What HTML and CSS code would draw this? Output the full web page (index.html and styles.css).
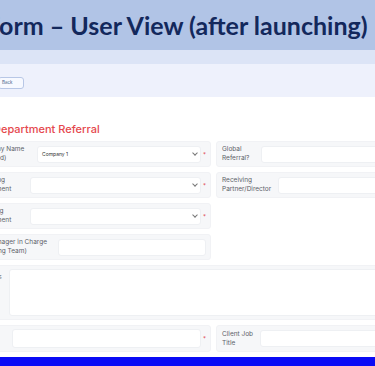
FILE: index.html
```html
<!DOCTYPE html>
<html lang="en">
  <head>
    <meta charset="UTF-8" />
    <title>Referral Form – User View</title>
    <link rel="stylesheet" href="styles.css">
  </head>
  <body>
    <header class="slide-title">
      <h1>Form – User View (after launching)</h1>
    </header>
    <div class="app-bar"></div>
    <div class="toolbar">
      <button class="btn-small" type="button">Back</button>
    </div>

    <main class="form-area">
      <div class="sheet">
        <h2 class="section-title">Department Referral</h2>

        <form class="grid">
          <div class="card">
            <label class="lbl w62">Company Name (Referred)</label>
            <div class="input select"><span class="value">Company 1</span><span class="chev"></span></div>
            <span class="req">*</span>
          </div>
          <div class="card right">
            <label class="lbl w39">Global Referral?</label>
            <div class="input"></div>
          </div>

          <div class="card">
            <label class="lbl w55">Receiving Department</label>
            <div class="input select"><span class="chev"></span></div>
            <span class="req">*</span>
          </div>
          <div class="card right">
            <label class="lbl w56">Receiving Partner/Director</label>
            <div class="input"></div>
          </div>

          <div class="card">
            <label class="lbl w55">Referring Department</label>
            <div class="input select"><span class="chev"></span></div>
            <span class="req">*</span>
          </div>
          <div class="empty"></div>

          <div class="card no-req">
            <label class="lbl w83">Key Manager in Charge (Referring Team)</label>
            <div class="input"></div>
          </div>
          <div class="empty"></div>

          <div class="card wide">
            <label class="lbl w34">Remarks</label>
            <div class="input textarea"></div>
          </div>

          <div class="card tall">
            <label class="lbl w37">Client Name</label>
            <div class="input short"></div>
            <span class="req">*</span>
          </div>
          <div class="card right tall">
            <label class="lbl w38">Client Job Title</label>
            <div class="input"></div>
          </div>
        </form>
      </div>
    </main>

    <footer class="blue-bar"></footer>
  </body>
</html>
```

FILE: styles.css
```css
body {
  margin: 0;
  width: 375px;
  height: 366px;
  overflow: hidden;
  background: #ffffff;
  font-family: "Inter", "Liberation Sans", sans-serif;
}

.slide-title {
  height: 50px;
  background: #b1c4e6;
  overflow: hidden;
  display: flex;
  align-items: center;
}

.slide-title h1 {
  margin: 0 0 0 -14px;
  white-space: nowrap;
  font-family: "Lato", "Liberation Sans", sans-serif;
  font-weight: 700;
  font-size: 25px;
  color: #13285c;
}

.app-bar {
  height: 14px;
  background: #dce4f6;
}

.toolbar {
  height: 33px;
  background: #eef1fc;
  display: flex;
  align-items: center;
  padding-top: 4px;
  box-sizing: border-box;
  overflow: hidden;
}

.btn-small {
  margin-left: -2px;
  height: 12px;
  width: 26px;
  padding: 0 0 0 3px;
  background: #f7f9ff;
  border: 1px solid #b8c7e6;
  border-radius: 3px;
  font-family: inherit;
  font-size: 4.5px;
  color: #4a5f8a;
  text-align: left;
}

.form-area {
  height: 260px;
  overflow: hidden;
}

.sheet {
  margin-left: -31px;
  width: 500px;
}

.section-title {
  margin: 25px 0 5px 24px;
  font-size: 11px;
  font-weight: 500;
  color: #e5484d;
}

.grid {
  display: grid;
  grid-template-columns: 242px 242px;
  column-gap: 5px;
  row-gap: 5px;
}

.card {
  display: flex;
  align-items: center;
  height: 26px;
  padding: 0 2px 0 5px;
  background: #f6f7f9;
  border: 1px solid #f1f2f5;
  border-radius: 3px;
  box-sizing: border-box;
}

.card.no-req {
  padding-right: 4px;
}

.card.tall {
  height: 27px;
}

.card.wide {
  grid-column: 1 / -1;
  height: 55px;
  align-items: flex-start;
  padding-top: 3px;
}

.lbl {
  flex: none;
  font-size: 6.5px;
  line-height: 9px;
  color: #5c6168;
}

.w34 { width: 34px; }
.w37 { width: 31px; margin-right: 6px; }
.w38 { width: 34px; margin-right: 4px; }
.w39 { width: 35px; margin-right: 4px; }
.w55 { width: 50px; margin-right: 5px; }
.w56 { width: 54px; margin-right: 2px; }
.w62 { width: 54px; margin-right: 8px; }
.w83 { width: 80px; margin-right: 3px; }

.card.wide .lbl {
  padding-top: 4px;
}

.input {
  flex: 1;
  height: 17px;
  background: #ffffff;
  border: 1px solid #eef0f3;
  border-radius: 3px;
  box-sizing: border-box;
  display: flex;
  align-items: center;
  padding: 0 3px 0 4px;
}

.input.textarea {
  height: 47px;
}

.input.short {
  height: 19px;
}

.value {
  font-size: 5px;
  color: #333;
}

.chev {
  margin-left: auto;
  width: 3px;
  height: 3px;
  border-right: 1px solid #777;
  border-bottom: 1px solid #777;
  transform: translateY(-1px) rotate(45deg);
}

.req {
  flex: none;
  width: 7px;
  text-align: center;
  font-size: 6px;
  color: #e0454b;
}

.blue-bar {
  height: 9px;
  background: #0a0af5;
}
```
